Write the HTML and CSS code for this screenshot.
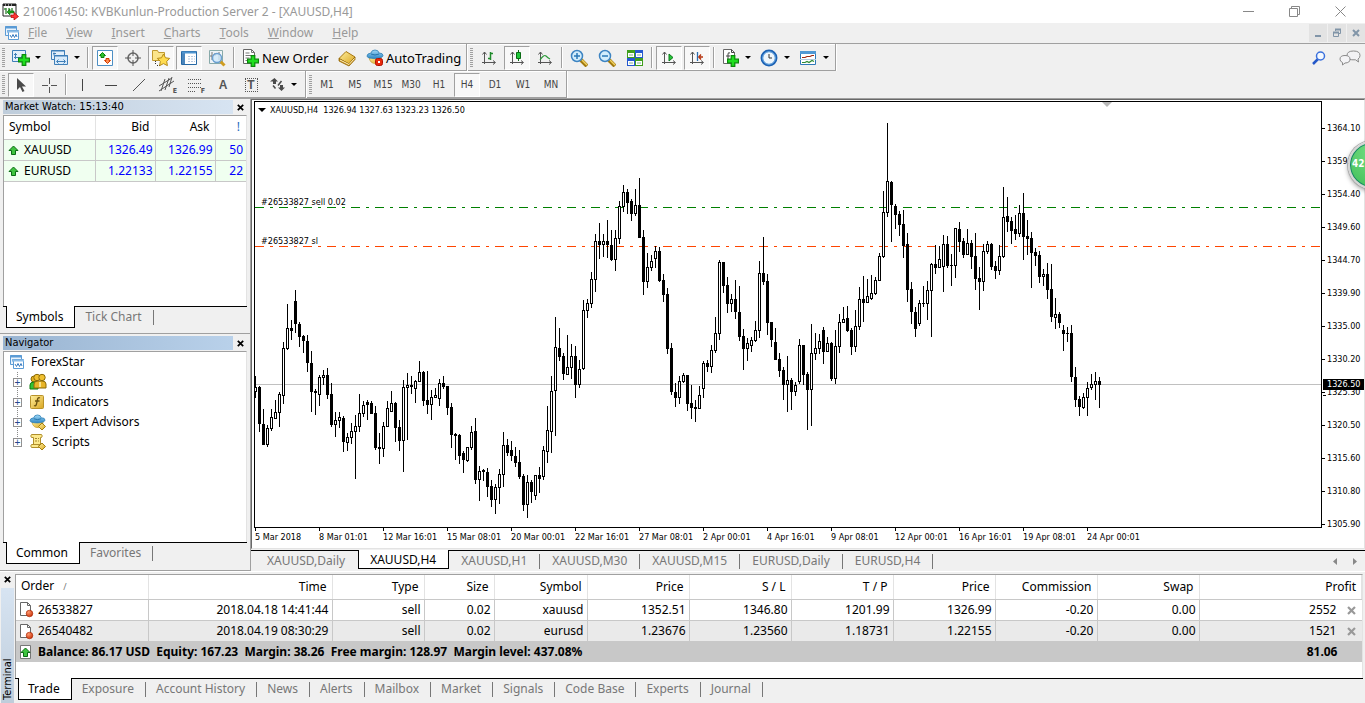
FILE: index.html
```html
<!DOCTYPE html>
<html lang="en">
<head>
<meta charset="utf-8">
<title>210061450: KVBKunlun-Production Server 2 - [XAUUSD,H4]</title>
<link rel="stylesheet" href="styles.css">
</head>
<body>
<svg class="defs" width="0" height="0" aria-hidden="true">
  <defs>
    <linearGradient id="gold" x1="0" y1="0" x2="1" y2="1"><stop offset="0" stop-color="#fff0a0"/><stop offset="1" stop-color="#d9a520"/></linearGradient>
    <linearGradient id="sky" x1="0" y1="0" x2="0" y2="1"><stop offset="0" stop-color="#9fd8f6"/><stop offset="1" stop-color="#2f86c4"/></linearGradient>
    <radialGradient id="ball" cx=".35" cy=".3" r=".8"><stop offset="0" stop-color="#ff9a70"/><stop offset="1" stop-color="#c62a00"/></radialGradient>
  </defs>
  <symbol id="i-plus" viewBox="0 0 10 10"><path d="M3.500.5h3v3h3v3h-3v3h-3v-3h-3v-3h3z" fill="#1fe01f" stroke="#0a8a0a"/></symbol>
  <symbol id="i-charts" viewBox="0 0 16 16"><path d="M1.500 1.500h11v9h-11z" fill="#eaf4fd" stroke="#5b9bd5"/><path d="M1 2.500h12" stroke="#5b9bd5" stroke-width="2"/><path d="M3 6h2M4 5v3" stroke="#5b9bd5"/><path d="M4.500 5.500h10v9h-10z" fill="#fff" stroke="#5b9bd5"/><path d="M4 6.500h11" stroke="#8dbce6" stroke-width="2"/><path d="M6 10l1.500 2.500L9 9.500l1.500 3L12 9.500l1 2.500" fill="none" stroke="#3a7cc0"/></symbol>
  <symbol id="i-up" viewBox="0 0 11 11"><path d="M5.500 1l4.500 4.500H7.500V9.500h-4V5.500H1z" fill="#3fc43f" stroke="#0b6b14"/></symbol>
  <symbol id="i-doc" viewBox="0 0 15 16"><path d="M1.500.5h7l3 3v10h-10z" fill="#fff" stroke="#666"/><path d="M8.500.5v3h3" fill="none" stroke="#666"/><circle cx="10.500" cy="11.500" r="3.300" fill="url(#ball)" stroke="#a32100" stroke-width=".6"/></symbol>
  <symbol id="i-x" viewBox="0 0 7 7"><path d="M.8.8l5.400 5.400M6.200.8L.8 6.200" fill="none" stroke="currentColor" stroke-width="1.700"/></symbol>
  <symbol id="i-axes" viewBox="0 0 16 16"><path d="M3.500 2v12M1 12.500h13M1.500 4.500l2-2.500 2 2.500M12 10.500l2.500 2-2.500 2" fill="none" stroke="#555"/></symbol>
  <symbol id="i-expert" viewBox="0 0 18 16"><path d="M3 8q1 7 7 6.500 5-1 5-6.500z" fill="url(#gold)" stroke="#c49a28" stroke-width=".7"/><path d="M1 7q0-2.500 4-3 .5-3 4-3t4 3q4 0 4 2.500Q17 9 9 9.500 1 9.500 1 7z" fill="url(#sky)" stroke="#2d7fb5" stroke-width=".8"/><path d="M5 5q4 2 8 0" fill="none" stroke="#2473a8"/></symbol>
</svg>

<header class="titlebar">
  <svg class="app-icon" width="17" height="17" viewBox="0 0 17 17"><path d="M1 1h13v12H1z" fill="#fff" stroke="#222"/><path d="M1 2h13" stroke="#222" stroke-width="2"/><path d="M3 2h1m2 0h1m2 0h1" stroke="#fff"/><path d="M4 5v6M2 6h2M7 5v6M10 5v4" stroke="#4a8f4a" stroke-width="1.500"/><path d="M5 9l3-3v2h4v2H8v2z" fill="#20a520" stroke="#066b06" stroke-width=".6"/><path d="M9 12h3v-2.500l4.500 4-4.500 3.500v-2.500H9z" fill="#f33" stroke="#a00" stroke-width=".7"/></svg>
  <h1>210061450: KVBKunlun-Production Server 2 - [XAUUSD,H4]</h1>
  <div class="window-controls">
    <button aria-label="Minimize"><svg width="11" height="11"><path d="M0 5.500h11" stroke="#888"/></svg></button>
    <button aria-label="Restore"><svg width="11" height="11"><path d="M.5 2.500h8v8h-8zM2.500 2.500v-2h8v8h-2" fill="none" stroke="#888"/></svg></button>
    <button aria-label="Close"><svg width="11" height="11"><path d="M.5.5l10 10M10.500.5l-10 10" stroke="#888"/></svg></button>
  </div>
</header>

<nav class="menubar">
  <svg width="16" height="16"><use href="#i-charts"/></svg>
  <button><u>F</u>ile</button><button><u>V</u>iew</button><button><u>I</u>nsert</button><button><u>C</u>harts</button><button><u>T</u>ools</button><button><u>W</u>indow</button><button><u>H</u>elp</button>
  <div class="child-controls">
    <button aria-label="Minimize chart"><svg width="10" height="10"><path d="M2 8h6" stroke="#8195a8" stroke-width="2"/></svg></button>
    <button aria-label="Restore chart"><svg width="10" height="10"><path d="M1.500 4.500h5v4h-5zM3.500 3V1.500h5v4H7" fill="none" stroke="#8195a8"/><path d="M1 4.500h6M3 1.500h6" stroke="#8195a8" stroke-width="2"/></svg></button>
    <button aria-label="Close chart"><svg width="10" height="10"><path d="M2 2l6 6M8 2L2 8" stroke="#8195a8" stroke-width="2"/></svg></button>
  </div>
</nav>

<div class="toolrow">
  <div class="toolbar">
    <i class="grip"></i>
    <button class="drop" aria-label="New chart"><svg width="20" height="20"><path d="M1.500 2.500h13v11h-13z" fill="#e4f0fb" stroke="#3f7fb8"/><path d="M4.500 5v6M3 6.500h3M3 9.500h9M10 8l2 1.500" fill="none" stroke="#3f7fb8"/><use href="#i-plus" x="7" y="6" width="12" height="12"/></svg><b class="arrow"></b></button>
    <button class="drop" aria-label="Profiles"><svg width="20" height="20"><path d="M1.500 2.500h13v9h-13z" fill="#e4f0fb" stroke="#3f7fb8"/><path d="M4 4.500v3m-1-2h3" stroke="#3f7fb8"/><path d="M4.500 7.500h13v9h-13z" fill="#d9ebfa" stroke="#3f7fb8"/><path d="M1 3h14M4 8h14" stroke="#3f7fb8"/><path d="M7 13.500h8M8.500 11.500l-2 2 2 2M13.500 11.500l2 2-2 2" fill="none" stroke="#3f7fb8"/></svg><b class="arrow"></b></button>
    <i class="sep"></i>
    <button class="on" aria-label="Market Watch" aria-pressed="true"><svg width="18" height="18"><path d="M1.500 1.500h15v15h-15z" fill="#fff" stroke="#4d8fc4"/><path d="M6.500 3.500L9.500 6.500H8v2H5v-2H3.500z" fill="#2fc52f" stroke="#0a7f0a"/><path d="M11.500 14.500l-3-3H10v-2h3v2h1.500z" fill="#ff8c50" stroke="#d03a00"/></svg></button>
    <button aria-label="Data Window"><svg width="18" height="18"><circle cx="9" cy="9" r="5" fill="none" stroke="#666" stroke-width="1.500"/><path d="M9 1v6M9 11v6M1 9h6M11 9h6" stroke="#555"/></svg></button>
    <button class="on" aria-label="Navigator" aria-pressed="true"><svg width="20" height="20"><path d="M1.500 2.500h5l1 2h6v8h-12z" fill="#fbe58a" stroke="#c09a30"/><path d="M4.500 13v4M6 17.500h4" stroke="#333" stroke-dasharray="1 1"/><path d="M12.500 6l2 3.800 4.200.6-3 3 .7 4.200-3.900-2-3.800 2 .6-4.200-3-3 4.200-.6z" fill="#ffdc50" stroke="#b58a16"/></svg></button>
    <button class="on" aria-label="Terminal" aria-pressed="true"><svg width="18" height="18"><path d="M1.500 2.500h15v13h-15z" fill="#fff" stroke="#2668a4"/><path d="M2 3h3v12H2z" fill="#4b86bd"/><path d="M2 3.500h14" stroke="#4e95d0" stroke-width="2"/><path d="M8 7.500h7M8 10h7M8 12.500h7" stroke="#b4c7df" stroke-dasharray="2 1"/></svg></button>
    <button aria-label="Strategy Tester"><svg width="20" height="20"><path d="M2.500 2.500h13v13h-13z" fill="#eef3f7" stroke="#8aa"/><path d="M5 4v8M8 5v3M3 8h2M12 4v8" stroke="#777"/><path d="M13 13l4.500 4.500" stroke="#cf9c20" stroke-width="3"/><circle cx="10" cy="10" r="4.500" fill="#cfe8fa" fill-opacity=".8" stroke="#6a9fd0" stroke-width="1.500"/></svg></button>
    <i class="sep"></i>
    <button class="label"><svg width="20" height="20"><path d="M2.500 1.500h8l3 3v11h-11z" fill="#fff" stroke="#666"/><path d="M10.500 1.500v3h3M4.500 5h4M4.500 7.500h6M4.500 10h4M4.500 12.500h3" fill="none" stroke="#777"/><use href="#i-plus" x="6" y="7" width="12" height="12"/></svg>New Order</button>
    <button aria-label="MetaEditor"><svg width="20" height="20"><path d="M2 10.500l7-7 9 5.500-6 7z" fill="url(#gold)" stroke="#a87810"/><path d="M2 10.500v2.500l10 5 6-6.500V9l-6 7z" fill="#c98c10" stroke="#8f6508" stroke-width=".8"/><path d="M3 12l9 4.500 5.500-6" fill="none" stroke="#fff3c0"/></svg></button>
    <button class="label auto"><svg width="20" height="20"><use href="#i-expert" x="1" y="1" width="18" height="16"/><rect x="10.500" y="10.500" width="7" height="7" rx="2" fill="#e8290b" stroke="#b01000"/><path d="M13 13h2v2h-2z" fill="#fff"/></svg>AutoTrading</button>
    <i class="edge"></i>
    <i class="grip"></i>
    <button aria-label="Bar chart"><svg width="16" height="16"><use href="#i-axes"/><path d="M9.500 2v8M7 8.500h2.500M9.500 3.500H12" fill="none" stroke="#1e8a2a" stroke-width="1.500"/></svg></button>
    <button class="on" aria-label="Candlesticks" aria-pressed="true"><svg width="16" height="16"><use href="#i-axes"/><path d="M9.500 0v11" stroke="#0a6b14"/><path d="M7.500 2.500h4v6h-4z" fill="#1fc83a" stroke="#0a6b14"/></svg></button>
    <button aria-label="Line chart"><svg width="16" height="16"><use href="#i-axes"/><path d="M3 10q4-6 6-4t4 3" fill="none" stroke="#2a9a38" stroke-width="1.200"/></svg></button>
    <i class="sep"></i>
    <button aria-label="Zoom in"><svg width="18" height="18"><path d="M11 11l6 6" stroke="#a27a10" stroke-width="4"/><path d="M12 11l5 5" stroke="#f0d060" stroke-width="1.500"/><circle cx="7" cy="7" r="5.500" fill="#d2edfc" stroke="#3d84c2" stroke-width="1.500"/><path d="M7 4v6M4 7h6" stroke="#2a78b8" stroke-width="1.500"/></svg></button>
    <button aria-label="Zoom out"><svg width="18" height="18"><path d="M11 11l6 6" stroke="#a27a10" stroke-width="4"/><path d="M12 11l5 5" stroke="#f0d060" stroke-width="1.500"/><circle cx="7" cy="7" r="5.500" fill="#d2edfc" stroke="#3d84c2" stroke-width="1.500"/><path d="M4 7h6" stroke="#2a78b8" stroke-width="1.500"/></svg></button>
    <button aria-label="Tile windows"><svg width="18" height="18"><path d="M1 1h8v8H1zM9 9h8v8H9z" fill="#3f9f1c"/><path d="M9 1h8v8H9zM1 9h8v8H1z" fill="#2458d0"/><path d="M2 4h6v4H2zM10 4h6v4h-6zM2 12h6v4H2zM10 12h6v4h-6z" fill="#fff"/><path d="M3 6h4M11 6h4M3 14h4M11 14h4" stroke="#7fae90"/></svg></button>
    <i class="sep"></i>
    <button class="on" aria-label="Auto scroll" aria-pressed="true"><svg width="16" height="16"><use href="#i-axes"/><path d="M8 4l4 3.500L8 11z" fill="#27c53b" stroke="#0b7a18"/></svg></button>
    <button class="on" aria-label="Chart shift" aria-pressed="true"><svg width="16" height="16"><use href="#i-axes"/><path d="M8.500 2v9" stroke="#2a6cb0" stroke-width="1.300"/><path d="M14 7h-4M12 4.500L9.800 7l2.200 2.500" fill="none" stroke="#b53410" stroke-width="1.400"/></svg></button>
    <i class="sep"></i>
    <button class="drop" aria-label="Indicators"><svg width="20" height="20"><path d="M2.500 1.500h8l3 3v11h-11z" fill="#fff" stroke="#666"/><path d="M10.500 1.500v3h3M9 5q-2-1-2 1v6M5 8h4" fill="none" stroke="#444"/><use href="#i-plus" x="6" y="7" width="12" height="12"/></svg><b class="arrow"></b></button>
    <button class="drop" aria-label="Periods"><svg width="20" height="20"><circle cx="9" cy="10" r="7.200" fill="#eef6fc" stroke="#1c62b4" stroke-width="2.500"/><circle cx="9" cy="10" r="6.300" fill="none" stroke="#77b4ea"/><path d="M9 6v4h3" fill="none" stroke="#333"/></svg><b class="arrow"></b></button>
    <button class="drop" aria-label="Templates"><svg width="20" height="20"><path d="M1.500 3.500h15v13h-15z" fill="#fff" stroke="#2e78b8"/><path d="M1 4.500h16" stroke="#4f98d4" stroke-width="3"/><path d="M3 9.500h3l2-1h3l2-1h2" fill="none" stroke="#a02810" stroke-width="1.200"/><path d="M1 11.500h16" stroke="#b4cce0"/><path d="M3 14.500h3l2-1 2 1 3-2 2 1" fill="none" stroke="#2d8a32" stroke-width="1.200"/></svg><b class="arrow"></b></button>
    <i class="edge"></i>
  </div>
  <div class="tool-right">
    <button aria-label="Search"><svg width="14" height="14"><path d="M1 13l5-5" stroke="#2458c8" stroke-width="2.500"/><circle cx="8.500" cy="5" r="4" fill="#f4f9ff" stroke="#3a70dc" stroke-width="1.500"/></svg></button>
    <button aria-label="Chat"><svg width="22" height="16"><path d="M14.500 1q6.500 0 6.500 4.500 0 2.500-2 3.500l.5 3-3-2.200Q8 10.500 8 5.500 8 1 14.500 1z" fill="#f2f2f4" stroke="#8a8a8a"/><path d="M6 5.500q5 0 5 3.700T6 13l-2.500 2v-2.500Q1 11.500 1 9.200 1 5.500 6 5.500z" fill="#f4f4f6" stroke="#8a8a8a"/></svg></button>
  </div>
</div>

<div class="toolrow">
  <div class="toolbar lines">
    <i class="grip"></i>
    <button class="on" aria-label="Cursor" aria-pressed="true"><svg width="16" height="18"><path d="M4 2v12l3-3 2.500 5 2-1L9 10.500h4z" fill="#4a4a4a"/></svg></button>
    <button aria-label="Crosshair"><svg width="16" height="16"><path d="M8.500 1v6M8.500 10v6M1 8.500h6M10 8.500h6" stroke="#555"/></svg></button>
    <i class="sep"></i>
    <button aria-label="Vertical line"><svg width="16" height="16"><path d="M7.500 2v12" stroke="#444"/></svg></button>
    <button aria-label="Horizontal line"><svg width="16" height="16"><path d="M2 8.500h12" stroke="#444"/></svg></button>
    <button aria-label="Trendline"><svg width="16" height="16"><path d="M2 14L14 2" stroke="#555"/></svg></button>
    <button aria-label="Channel"><svg width="18" height="18"><path d="M1 10L14 2M1 15L16 5M3 15L7 3M7 14l4-12M11 11l3-10" stroke="#555"/></svg><small>E</small></button>
    <button aria-label="Fibonacci"><svg width="16" height="16"><path d="M1 2.500h14M1 6.500h14M1 10.500h14M1 14.500h8" stroke="#555" stroke-dasharray="1 1"/></svg><small>F</small></button>
    <button class="glyph">A</button>
    <button class="glyph"><span class="dotted">T</span></button>
    <button class="drop" aria-label="Arrows"><svg width="18" height="18"><path d="M1 5.500L5.500 2 9 5.500H7V8H4V5.500zM9 11.500h2V9h3v2.500h2L12.500 15z" fill="#4a4a4a"/><path d="M4 9.500l2.500 3M9 9.500L12.500 5" stroke="#4a4a4a" stroke-width="1.500"/></svg><b class="arrow"></b></button>
    <i class="edge"></i>
    <i class="grip"></i>
    <button class="tf">M1</button><button class="tf">M5</button><button class="tf">M15</button><button class="tf">M30</button><button class="tf">H1</button><button class="tf on" aria-pressed="true">H4</button><button class="tf">D1</button><button class="tf">W1</button><button class="tf">MN</button>
    <i class="edge"></i>
  </div>
</div>

<main class="work">
  <aside class="dock">
    <section class="panel">
      <div class="panel-head"><h2 class="idle">Market Watch: 15:13:40</h2><button aria-label="Close Market Watch"><svg width="7" height="7"><use href="#i-x"/></svg></button></div>
      <div class="panel-body">
        <table class="quotes">
          <colgroup><col class="q-symbol"><col class="q-price"><col class="q-price"><col></colgroup>
          <thead><tr><th>Symbol</th><th>Bid</th><th>Ask</th><th class="mark">!</th></tr></thead>
          <tbody>
            <tr><td><svg width="11" height="11"><use href="#i-up"/></svg>XAUUSD</td><td>1326.49</td><td>1326.99</td><td>50</td></tr>
            <tr><td><svg width="11" height="11"><use href="#i-up"/></svg>EURUSD</td><td>1.22133</td><td>1.22155</td><td>22</td></tr>
          </tbody>
        </table>
      </div>
      <div class="tabs"><button class="active">Symbols</button><button>Tick Chart</button></div>
    </section>
    <section class="panel">
      <div class="panel-head"><h2>Navigator</h2><button aria-label="Close Navigator"><svg width="7" height="7"><use href="#i-x"/></svg></button></div>
      <div class="panel-body">
        <div class="tree-root"><svg width="16" height="16"><use href="#i-charts"/></svg>ForexStar</div>
        <ul class="tree">
          <li><button aria-label="Expand Accounts">+</button><svg width="18" height="18"><circle cx="5" cy="6" r="3" fill="#e0b020" stroke="#8a6a08"/><path d="M1 16V12q0-3 4-3t4 3v4z" fill="#34c234" stroke="#0d7a0d"/><circle cx="8" cy="4.500" r="3.200" fill="#f0c030" stroke="#8a6a08"/><circle cx="13" cy="4.500" r="3.200" fill="#f0c030" stroke="#8a6a08"/><path d="M5 15V11q0-3 4-3h4q4 0 4 3v4z" fill="#e8b428" stroke="#8a6a08"/><path d="M11 9v5" stroke="#fff4b0" stroke-width="1.500"/></svg>Accounts</li>
          <li><button aria-label="Expand Indicators">+</button><svg width="18" height="18"><rect x="1.500" y="2.500" width="13" height="13" rx="1" fill="url(#gold)" stroke="#b8922a"/><path d="M11 5q-2-1-2.500 1.500L7.500 11Q7 13.500 5 12.500M6 8h4.500" fill="none" stroke="#6b5310" stroke-width="1.300"/></svg>Indicators</li>
          <li><button aria-label="Expand Expert Advisors">+</button><svg width="18" height="18"><use href="#i-expert" y="1" width="17" height="15"/><path d="M13 10l3.500 3.500L13 17l-3.500-3.500z" fill="url(#gold)" stroke="#a5800f"/></svg>Expert Advisors</li>
          <li><button aria-label="Expand Scripts">+</button><svg width="18" height="18"><path d="M2.500 1.500h10q1.500 1.500 0 3h-1v7h-7v-7h-2q-1.500-1.500 0-3zM2.500 11.500h8q-1.500 1.500 0 3h-8q-1.500-1.500 0-3z" fill="#fce98c" stroke="#b08f2c"/><path d="M6 5.500h4M6 8h4" stroke="#a38630" stroke-dasharray="2 1"/><path d="M13 10l3.500 3.500L13 17l-3.500-3.500z" fill="url(#gold)" stroke="#a5800f"/></svg>Scripts</li>
        </ul>
      </div>
      <div class="tabs"><button class="active">Common</button><button>Favorites</button></div>
    </section>
  </aside>

  <section class="chart-area">
    <div class="chart">
      <div class="plot">
        <svg class="series" id="series" aria-label="XAUUSD H4 candlestick chart"></svg>
        <p class="caption"><b class="arrow"></b>XAUUSD,H4&nbsp; 1326.94 1327.63 1323.23 1326.50</p>
        <span class="order-label sell">#26533827 sell 0.02</span>
        <span class="order-label stop">#26533827 sl</span>
        <i class="shift-mark"></i>
      </div>
      <ul class="prices">
        <li>1364.10</li><li>1359.20</li><li>1354.40</li><li>1349.60</li><li>1344.70</li><li>1339.90</li><li>1335.00</li><li>1330.20</li><li>1325.30</li><li>1320.50</li><li>1315.60</li><li>1310.80</li><li>1305.90</li>
        <li class="current">1326.50</li>
      </ul>
      <ul class="times">
        <li>5 Mar 2018</li><li>8 Mar 01:01</li><li>12 Mar 16:01</li><li>15 Mar 08:01</li><li>20 Mar 00:01</li><li>22 Mar 16:01</li><li>27 Mar 08:01</li><li>2 Apr 00:01</li><li>4 Apr 16:01</li><li>9 Apr 08:01</li><li>12 Apr 00:01</li><li>16 Apr 16:01</li><li>19 Apr 08:01</li><li>24 Apr 00:01</li>
      </ul>
      <div class="badge">42</div>
    </div>
    <div class="tabs chart-tabs">
      <button class="plain">XAUUSD,Daily</button><button class="active">XAUUSD,H4</button><button>XAUUSD,H1</button><button>XAUUSD,M30</button><button>XAUUSD,M15</button><button>EURUSD,Daily</button><button>EURUSD,H4</button>
      <div class="scrollers"><button aria-label="Previous tabs"><svg width="5" height="7"><path d="M4 0v7L0 3.500z" fill="#888"/></svg></button><button aria-label="Next tabs"><svg width="5" height="7"><path d="M1 0v7l4-3.500z" fill="#888"/></svg></button></div>
    </div>
  </section>
</main>

<section class="terminal">
  <div class="strip"><button aria-label="Close Terminal"><svg width="7" height="7"><use href="#i-x"/></svg></button><h2>Terminal</h2></div>
  <div class="terminal-main">
    <div class="terminal-body">
      <table class="orders">
        <colgroup><col class="o-order"><col class="o-time"><col class="o-type"><col class="o-size"><col class="o-symbol"><col class="o-num"><col class="o-num"><col class="o-num"><col class="o-num"><col class="o-num"><col class="o-num"><col></colgroup>
        <thead><tr><th>Order <span class="sort">/</span></th><th>Time</th><th>Type</th><th>Size</th><th>Symbol</th><th>Price</th><th>S / L</th><th>T / P</th><th>Price</th><th>Commission</th><th>Swap</th><th>Profit</th></tr></thead>
        <tbody>
          <tr><td><svg width="15" height="16"><use href="#i-doc"/></svg>26533827</td><td>2018.04.18 14:41:44</td><td>sell</td><td>0.02</td><td>xauusd</td><td>1352.51</td><td>1346.80</td><td>1201.99</td><td>1326.99</td><td>-0.20</td><td>0.00</td><td>2552<button aria-label="Close order 26533827"><svg width="9" height="9" viewBox="0 0 7 7"><use href="#i-x"/></svg></button></td></tr>
          <tr><td><svg width="15" height="16"><use href="#i-doc"/></svg>26540482</td><td>2018.04.19 08:30:29</td><td>sell</td><td>0.02</td><td>eurusd</td><td>1.23676</td><td>1.23560</td><td>1.18731</td><td>1.22155</td><td>-0.20</td><td>0.00</td><td>1521<button aria-label="Close order 26540482"><svg width="9" height="9" viewBox="0 0 7 7"><use href="#i-x"/></svg></button></td></tr>
        </tbody>
        <tfoot><tr><td colspan="11"><svg width="15" height="15"><path d="M1.500.5h10v13h-10z" fill="#fff" stroke="#777"/><use href="#i-up" x="1" y="2" width="11" height="11"/></svg>Balance: 86.17 USD&nbsp; Equity: 167.23&nbsp; Margin: 38.26&nbsp; Free margin: 128.97&nbsp; Margin level: 437.08%</td><td>81.06</td></tr></tfoot>
      </table>
    </div>
    <div class="tabs"><button class="active">Trade</button><button>Exposure</button><button>Account History</button><button>News</button><button>Alerts</button><button>Mailbox</button><button>Market</button><button>Signals</button><button>Code Base</button><button>Experts</button><button>Journal</button></div>
  </div>
</section>
<script src="chart.js"></script>
</body>
</html>
```
FILE: styles.css
```css
* { box-sizing: border-box; }

body {
  margin: 0;
  height: 100vh;
  display: flex;
  flex-direction: column;
  overflow: hidden;
  background: #f0f0f0;
  color: #000;
  font: 12px/20px "Noto Sans", "Open Sans", sans-serif;
}

h1, h2, p, ul { margin: 0; padding: 0; font: inherit; list-style: none; }
button { margin: 0; padding: 0; border: 0; background: none; color: inherit; font: inherit; }
svg { display: block; flex: none; }
.defs { position: absolute; }

/* Title and menu */
.titlebar { display: flex; align-items: center; height: 23px; padding: 0 2px; background: #fff; color: #999; }
.titlebar h1 { flex: 1; margin-left: 4px; }
.window-controls { display: flex; }
.window-controls button { display: grid; place-items: center; width: 46px; height: 20px; }

.menubar { display: flex; align-items: center; height: 21px; padding-left: 4px; border-bottom: 1px solid #a0a0a0; color: #999; }
.menubar > button { margin-left: 3px; padding: 0 5px; }
.menubar > button + button { margin-left: 9px; }
.child-controls { display: flex; gap: 1px; margin-left: auto; }
.child-controls button { display: grid; place-items: center; width: 18px; height: 18px; background: #e3e3e3; }

/* Toolbars */
.toolrow { display: flex; justify-content: space-between; height: 27px; }
.toolbar { display: flex; align-items: center; gap: 2px; height: 27px; padding: 1px 0 1px 2px; border-top: 1px solid #fff; border-bottom: 1px solid #a0a0a0; }
.toolbar button { position: relative; display: flex; flex: none; align-items: center; justify-content: center; width: 26px; height: 24px; }
.toolbar .on { border: 1px solid; border-color: #a0a0a0 #fff #fff #a0a0a0; background: #f8f8f8; }
.toolbar .drop { justify-content: flex-start; gap: 4px; width: 37px; padding-left: 3px; }
.toolbar .label { justify-content: flex-start; gap: 1px; width: 94px; padding-left: 3px; font-size: 13px; }
.toolbar .auto { width: 102px; }
.toolbar small { position: absolute; right: 3px; bottom: 2px; font: bold 7px/8px "DejaVu Sans Condensed", sans-serif; color: #555; }
.toolbar .glyph { font: bold 12px/14px "Liberation Sans", sans-serif; color: #555; }
.dotted { width: 13px; border: 1px dotted #555; line-height: 12px; }
.toolbar .tf { font: 10px/14px "DejaVu Sans Condensed", sans-serif; color: #444; }
.arrow { border: 3px solid transparent; border-top-color: #000; border-bottom: 0; }
.grip { width: 3px; height: 20px; margin-right: 1px; background: repeating-linear-gradient(#a0a0a0 0 1px, #f0f0f0 1px 2px); }
.lines .edge + .grip { margin-right: 0; }
.sep { width: 2px; height: 21px; margin: 0 1px; border-left: 1px solid #a0a0a0; background: #fff; }
.edge { width: 2px; height: 27px; border-left: 1px solid #a0a0a0; background: #fff; }
.tool-right { display: flex; align-items: center; gap: 13px; padding-right: 4px; }

/* Panels on the left */
.work { display: grid; grid-template-columns: 250px 1fr; flex: 1; min-height: 0; border-top: 1px solid #a0a0a0; }
.dock { display: flex; flex-direction: column; min-height: 0; }
.panel { display: flex; flex: 1; flex-direction: column; padding: 0 3px 3px; border-bottom: 1px solid #a0a0a0; }
.panel + .panel { padding: 1px 3px 4px; }
.panel-head { display: flex; align-items: center; height: 16px; }
.panel-head h2 { flex: 1; padding-left: 2px; background: linear-gradient(90deg, #99b4d1, #b9d1ea); font: 11px/14px "DejaVu Sans Condensed", sans-serif; }
.panel-head .idle { background: linear-gradient(90deg, #bfcddb, #d7e4f2); }
.panel-head button { padding: 0 3px 0 4px; }
.panel-body { flex: 1; border: 1px solid; border-color: #a0a0a0 #e3e3e3 #fff #a0a0a0; border-bottom: 0; background: #fff; }

.tabs { display: flex; height: 24px; padding-left: 3px; border-top: 1px solid #000; color: #777; }
.tabs > button { position: relative; height: 20px; padding: 0 12px 0 10px; }
.tabs > button:not(.active):not(.plain)::after { content: ""; position: absolute; right: 0; top: 3px; height: 15px; border-right: 1px solid #777; }
.tabs .active { height: 22px; margin-top: -1px; padding: 0 11px 0 9px; border: 1px solid #000; border-top: 0; background: #fff; color: #000; }

table { width: 100%; border-collapse: collapse; table-layout: fixed; }
th { font-weight: normal; text-align: right; }
th, td { white-space: nowrap; }
td svg { display: inline-block; vertical-align: middle; }

.quotes th { height: 23px; padding: 0 5px; border-right: 1px solid #e3e3e3; border-bottom: 1px solid #c8c8c8; }
.quotes td { height: 21px; padding: 0 2px; border-right: 1px solid #c8c8c8; border-bottom: 1px solid #c8c8c8; background: #f0fff0; color: #00f; line-height: 18px; text-align: right; }
.quotes th:first-child { text-align: left; }
.quotes td:first-child { padding-left: 4px; color: #000; text-align: left; }
.quotes td svg { margin-right: 5px; }
.quotes th:last-child { padding-right: 6px; border-right: 0; }
.quotes td:last-child { padding-right: 3px; border-right: 0; }
.quotes .mark { color: #2a6cc0; }
.q-symbol { width: 91px; }
.q-price { width: 60px; }

.tree-root { display: flex; align-items: center; gap: 6px; height: 20px; padding-left: 5px; }
.tree { margin-left: 13px; border-left: 1px dotted #888; height: 71px; }
.tree li { display: flex; align-items: center; height: 20px; gap: 5px; }
.tree button { width: 9px; height: 9px; margin-left: -5px; border: 1px solid #919191; background: #fff; color: #26488c; font: 10px/7px "Liberation Sans", sans-serif; }
.tree button + svg { margin-left: 2px; }

/* Chart */
.chart-area { display: flex; flex-direction: column; min-width: 0; overflow: hidden; border-left: 1px solid #a0a0a0; }
.chart { position: relative; display: grid; flex: 1; grid-template-columns: 1fr 41px; grid-template-rows: 1fr 20px; min-height: 0; padding: 1px 1px 0 2px; border: 1px solid #696969; border-color: #696969 #e3e3e3 #e3e3e3 #696969; background: #fff; font: 9px/12px "DejaVu Sans Condensed", sans-serif; }
.plot { position: relative; min-height: 0; border: 1px solid #000; }
.series { position: absolute; width: 100%; height: 100%; }
.caption { position: absolute; left: 3px; top: 2px; display: flex; align-items: center; gap: 4px; }
.caption .arrow { border-width: 4px; border-bottom: 0; }
.order-label { position: absolute; left: 6px; }
.sell { top: 94px; }
.stop { top: 133px; }
.shift-mark { position: absolute; left: 847px; top: 0; border: 5px solid transparent; border-top-color: #b8b8b8; border-bottom: 0; }
.prices { position: relative; height: 0; margin-top: 11px; }
.prices li { position: relative; height: 33px; padding-left: 5px; line-height: 33px; }
.prices li::before { content: ""; position: absolute; left: 0; top: 16px; width: 3px; height: 1px; background: #000; }
.prices .current { position: absolute; left: 1px; top: 267px; width: 41px; height: 11px; padding-left: 4px; background: #000; color: #fff; line-height: 11px; }
.times { display: flex; grid-column: 1 / 3; padding-left: 1px; overflow: hidden; }
.times li { position: relative; flex: 0 0 64px; padding-top: 3px; white-space: nowrap; }
.times li::before { content: ""; position: absolute; left: 0; top: 0; width: 1px; height: 3px; background: #000; }
.badge { position: absolute; right: -32px; top: 41px; width: 48px; height: 48px; padding-left: 2px; border: 2px solid #d4d4d4; border-radius: 50%; background: radial-gradient(circle at 60% 20%, #7be087, #3cbd55); box-shadow: 0 0 0 1px #aaa, inset 0 0 0 1px #15806b, 0 2px 5px #0006; color: #fff; font: bold 10px/42px "DejaVu Sans Condensed", sans-serif; }
.chart-tabs { height: 21px; margin-top: 1px; padding-left: 4px; }
.chart-tabs > button { padding: 0 13px 0 12px; }
.chart-tabs .active { height: 19px; padding: 0 12px 0 11px; }
.scrollers { display: flex; gap: 14px; margin-left: auto; padding-right: 8px; }

/* Terminal */
.terminal { display: grid; grid-template-columns: 15px 1fr; height: 132px; padding-right: 2px; border-top: 1px solid #fff; }
.strip { display: flex; flex-direction: column; align-items: center; gap: 5px; padding: 4px 1px 0; }
.strip h2 { flex: 1; width: 13px; padding-top: 3px; background: linear-gradient(#bfcddb, #d7e4f2); font: 11px/13px "DejaVu Sans Condensed", sans-serif; writing-mode: vertical-rl; transform: rotate(180deg); }
.terminal-main { display: flex; flex-direction: column; padding-top: 2px; }
.terminal-body { flex: 1; border: 1px solid #a0a0a0; border-bottom: 0; border-right-color: #e3e3e3; background: #fff; }
.orders th { height: 24px; padding: 0 5px; border-right: 1px solid #e3e3e3; border-bottom: 1px solid #c8c8c8; }
.orders td { height: 21px; padding: 0 3px; border-right: 1px solid #c8c8c8; line-height: 18px; text-align: right; }
.orders th:first-child, .orders td:first-child { text-align: left; }
.orders tbody tr:first-child td { border-bottom: 1px solid #c8c8c8; }
.orders tbody tr:nth-child(2) { background: #eaeaea; }
.orders tfoot { background: #c8c8c8; font-weight: bold; }
.orders td svg { margin-right: 4px; }
.orders td:last-child { padding-right: 6px; border-right: 0; }
.orders tfoot td { border: 0; }
.orders tfoot td:last-child { padding-right: 24px; }
.orders td button { margin-left: 10px; color: #999; }
.orders td button svg { margin: 0; }
.sort { margin-left: 6px; color: #777; font-size: 9px; }
.o-order { width: 132px; }
.o-time { width: 184px; }
.o-type { width: 92px; }
.o-size { width: 70px; }
.o-symbol { width: 93px; }
.o-num { width: 102px; }
.terminal .tabs { height: 25px; }
```
FILE: chart.js
```js
// Bars are listed as [high, body top, body bottom, low, falling] in thirds of a
// pixel below each segment's base line; they are spaced four pixels apart.
const segments = [
  { base: 178, bars: [
    [288,322,334,355,0],[318,322,433,455,1],[388,433,494,494,1],[437,445,494,500,0],[388,412,445,452,0],[361,397,415,415,0],
    [337,343,397,440,0],[186,205,346,371,0],[72,145,206,209,0],[121,145,154,180,1],[30,64,133,158,1],[127,133,170,200,1],
    [165,168,184,218,1],[165,184,250,276,1],[213,250,335,396,1],[328,334,340,404,1],[285,292,344,377,0],[270,286,292,315,0],
    [264,286,344,356,1],[310,343,434,440,1],[396,421,434,470,0],[398,412,422,444,0],[408,414,486,516,1],[459,473,486,513,0],
    [430,454,473,491,0],[406,439,454,597,0],[342,400,440,456,0],[364,376,400,410,0],[360,367,375,421,1],[364,370,401,401,1],
    [378,400,503,510,1],[459,502,506,552,1],[427,439,506,531,0],[364,385,439,439,0],[334,370,395,395,0],[367,370,443,486,1],
    [421,442,482,512,1],[300,322,482,575,0],[279,316,322,480,0],[289,316,320,341,1],[301,304,325,369,0],[243,277,304,304,0],
    [274,277,362,378,1],[274,361,374,401,1],[331,352,373,419,0],[325,346,352,353,0],[297,310,355,377,0],[288,310,320,327,1],
    [318,320,383,404,1],[370,383,464,503,1],[459,463,467,540,1],[463,466,529,552,1],[514,520,540,578,1],[502,502,540,545,0],
    [438,457,503,510,0],[415,454,599,611,1],[558,574,599,663,0],[567,571,576,603,1],[564,576,620,651,1],[601,619,659,681,1],
    [613,622,659,702,0],[568,583,622,671,0],[457,496,583,620,0],[477,495,518,528,1],[483,511,527,543,1],[502,528,548,560,1],
    [510,547,590,597,1],[583,588,674,692,1],[586,607,674,714,0],[601,606,635,668,1],[586,586,647,659,0],[562,586,598,640,1],
    [500,510,590,600,0]] },
  { base: 68, bars: [
    [708,781,845,880,0],[618,664,784,850,0],[441,532,661,798,0],[474,535,560,573,1],[549,559,613,630,1],[495,592,613,613,0],
    [522,559,592,627,0],[528,559,644,684,1],[570,598,644,654,0],[390,421,596,600,0],[387,400,421,444,0],[306,328,400,413,0],
    [192,214,328,366,0],[159,214,224,267,1],[192,214,224,262,0],[150,214,224,264,1],[180,225,269,273,1],[180,205,268,303,0],
    [94,109,205,223,0],[45,67,109,126,0],[57,67,98,132,1],[87,94,131,153,1],[57,106,130,138,0],[24,105,203,203,1],
    [180,202,335,375,1],[249,292,335,354,0],[255,274,292,303,0],[228,244,265,294,0],[231,244,332,336,1],[312,332,374,396,1],
    [354,373,536,552,1],[519,535,665,675,1],[640,667,683,711,1],[618,634,683,702,0],[609,616,634,639,0],[615,616,701,723,1],
    [645,700,713,747,1],[690,712,716,756,1],[648,676,716,716,0],[573,580,656,684,0],[570,580,590,606,1],[525,541,590,609,0],
    [441,490,542,549,0],[270,277,491,510,0],[276,277,347,369,1],[321,346,401,429,1],[372,388,401,426,0],[330,388,426,447,1],
    [348,427,500,513,1],[477,499,536,600,1],[504,520,536,573,0],[501,511,527,546,0],[453,481,512,516,0],[273,310,482,504,0],
    [201,310,335,345,1],[312,334,458,495,1],[457,457,510,531,1],[474,517,570,570,1],[549,568,602,621,1],[591,601,644,690,1],
    [558,631,644,726,0],[624,631,665,720,1],[636,646,665,678,0],[507,526,635,642,0],[525,526,614,645,1],[606,613,659,780,1],
    [462,550,659,768,0],[489,535,550,570,0]] },
  { base: 8, bars: [
    [672,694,715,732,0],[651,661,725,762,1],[681,700,724,726,0],[696,699,806,813,1],[660,709,806,822,0],[612,637,709,729,0],
    [591,628,637,640,0],[588,625,662,666,1],[654,661,710,735,1],[600,649,710,726,0],[531,568,649,660,0],[498,568,578,636,1],
    [507,559,577,579,0],[495,550,566,570,0],[501,511,551,555,0],[429,439,512,513,0],[243,307,440,444,0],[39,214,307,321,0],
    [213,217,284,396,1],[282,289,314,357,1],[303,313,344,378,1],[300,343,407,444,1],[369,403,539,576,1],[516,538,605,642,1],
    [591,607,656,681,1],[570,580,641,648,0],[528,579,581,591,1],[513,541,580,630,0],[459,463,541,681,0],[405,463,473,492,1],
    [408,448,472,474,0],[375,403,469,546,0],[378,403,467,474,1],[432,466,467,528,1],[354,355,466,504,0],[336,358,395,426,1],
    [384,394,434,444,1],[357,400,433,435,0],[390,400,440,477,1],[369,439,506,540,1],[471,505,515,600,1],[402,424,515,543,0],
    [393,403,425,432,0],[400,403,470,480,1],[453,469,482,507,1],[405,439,482,495,0],[231,322,439,444,0],[261,319,335,366,1],
    [321,334,362,402,1],[315,358,371,390,1],[285,310,370,381,0],[249,310,380,450,1],[330,379,386,435,1],[366,385,428,534,1],
    [414,427,437,468,1],[423,436,500,519,1],[477,493,499,528,0],[459,493,539,567,1],[462,538,622,636,1],[564,613,622,657,0],
    [606,613,638,654,1],[645,661,671,723,1],[651,669,671,696,1],[645,670,802,816,1],[771,802,869,891,1],[858,868,890,918,1],
    [849,862,893,897,0],[816,835,862,918,0],[792,823,832,840,0],[786,814,823,870,0],[801,814,824,894,1]] }
];

const rect = (x, y, w, h) => `M${x} ${y}h${w}v${h}h${-w}z`;
let ink = "";
let hollow = "";
let x = 0;

for (const { base, bars } of segments) {
  for (const [high, top, bottom, low, falling] of bars) {
    const y = (v) => base + Math.floor(v / 3);
    const bodyEnd = falling ? Math.max(base + Math.round(bottom / 3), y(top) + 1) : y(bottom) + 1;
    ink += rect(x, y(high), 1, Math.max(base + Math.round(low / 3), bodyEnd) - y(high));
    ink += rect(x - 1, y(top), 3, bodyEnd - y(top));
    if (!falling && bodyEnd - y(top) > 2) hollow += rect(x, y(top) + 1, 1, bodyEnd - y(top) - 2);
    x += 4;
  }
}

const level = (y, color, dash) =>
  `<line x1="0" x2="100%" y1="${y + 0.5}" y2="${y + 0.5}" stroke="${color}" stroke-dasharray="${dash}"/>`;

document.getElementById("series").innerHTML =
  level(105, "#008000", "9 6 3 6") +
  level(144, "#ff4500", "9 6 3 6") +
  level(282, "#c0c0c0", "none") +
  `<path d="${ink}" fill="#000" shape-rendering="crispEdges"/>` +
  `<path d="${hollow}" fill="#fff" shape-rendering="crispEdges"/>`;
```
